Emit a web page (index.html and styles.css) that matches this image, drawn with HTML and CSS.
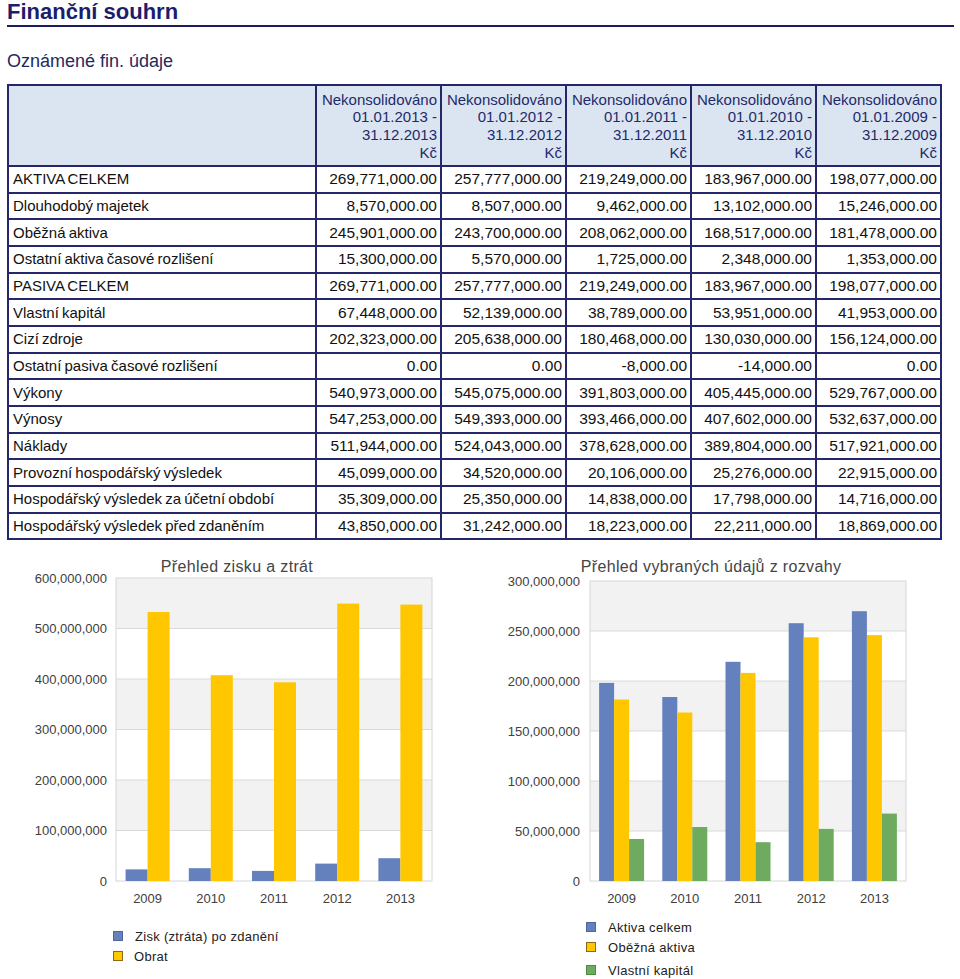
FILE: index.html
```html
<!DOCTYPE html>
<html lang="cs">
<head>
<meta charset="utf-8">
<title>Finanční souhrn</title>
<link rel="stylesheet" href="styles.css">
</head>
<body>
<div class="page">
  <h1 class="title">Finanční souhrn</h1>
  <h2 class="subtitle">Oznámené fin. údaje</h2>
  <table class="fin">
    <thead>
      <tr>
        <th class="lbl-head"></th>
        <th class="col-head">Nekonsolidováno<br>01.01.2013 -<br>31.12.2013<br>Kč</th>
        <th class="col-head">Nekonsolidováno<br>01.01.2012 -<br>31.12.2012<br>Kč</th>
        <th class="col-head">Nekonsolidováno<br>01.01.2011 -<br>31.12.2011<br>Kč</th>
        <th class="col-head">Nekonsolidováno<br>01.01.2010 -<br>31.12.2010<br>Kč</th>
        <th class="col-head">Nekonsolidováno<br>01.01.2009 -<br>31.12.2009<br>Kč</th>
      </tr>
    </thead>
    <tbody>
      <tr><td class="lbl">AKTIVA CELKEM</td><td>269,771,000.00</td><td>257,777,000.00</td><td>219,249,000.00</td><td>183,967,000.00</td><td>198,077,000.00</td></tr>
      <tr><td class="lbl">Dlouhodobý majetek</td><td>8,570,000.00</td><td>8,507,000.00</td><td>9,462,000.00</td><td>13,102,000.00</td><td>15,246,000.00</td></tr>
      <tr><td class="lbl">Oběžná aktiva</td><td>245,901,000.00</td><td>243,700,000.00</td><td>208,062,000.00</td><td>168,517,000.00</td><td>181,478,000.00</td></tr>
      <tr><td class="lbl">Ostatní aktiva časové rozlišení</td><td>15,300,000.00</td><td>5,570,000.00</td><td>1,725,000.00</td><td>2,348,000.00</td><td>1,353,000.00</td></tr>
      <tr><td class="lbl">PASIVA CELKEM</td><td>269,771,000.00</td><td>257,777,000.00</td><td>219,249,000.00</td><td>183,967,000.00</td><td>198,077,000.00</td></tr>
      <tr><td class="lbl">Vlastní kapitál</td><td>67,448,000.00</td><td>52,139,000.00</td><td>38,789,000.00</td><td>53,951,000.00</td><td>41,953,000.00</td></tr>
      <tr><td class="lbl">Cizí zdroje</td><td>202,323,000.00</td><td>205,638,000.00</td><td>180,468,000.00</td><td>130,030,000.00</td><td>156,124,000.00</td></tr>
      <tr><td class="lbl">Ostatní pasiva časové rozlišení</td><td>0.00</td><td>0.00</td><td>-8,000.00</td><td>-14,000.00</td><td>0.00</td></tr>
      <tr><td class="lbl">Výkony</td><td>540,973,000.00</td><td>545,075,000.00</td><td>391,803,000.00</td><td>405,445,000.00</td><td>529,767,000.00</td></tr>
      <tr><td class="lbl">Výnosy</td><td>547,253,000.00</td><td>549,393,000.00</td><td>393,466,000.00</td><td>407,602,000.00</td><td>532,637,000.00</td></tr>
      <tr><td class="lbl">Náklady</td><td>511,944,000.00</td><td>524,043,000.00</td><td>378,628,000.00</td><td>389,804,000.00</td><td>517,921,000.00</td></tr>
      <tr><td class="lbl">Provozní hospodářský výsledek</td><td>45,099,000.00</td><td>34,520,000.00</td><td>20,106,000.00</td><td>25,276,000.00</td><td>22,915,000.00</td></tr>
      <tr><td class="lbl">Hospodářský výsledek za účetní období</td><td>35,309,000.00</td><td>25,350,000.00</td><td>14,838,000.00</td><td>17,798,000.00</td><td>14,716,000.00</td></tr>
      <tr><td class="lbl">Hospodářský výsledek před zdaněním</td><td>43,850,000.00</td><td>31,242,000.00</td><td>18,223,000.00</td><td>22,211,000.00</td><td>18,869,000.00</td></tr>
    </tbody>
  </table>

  <div class="charts">
    <svg class="chart" width="480" height="429" viewBox="0 0 480 429" xmlns="http://www.w3.org/2000/svg">
      <text class="ch-title" x="237" y="23" text-anchor="middle">Přehled zisku a ztrát</text>
      <rect class="band" x="116" y="29" width="316" height="50.5"/>
      <rect class="band" x="116" y="130" width="316" height="50.5"/>
      <rect class="band" x="116" y="231" width="316" height="50.5"/>
      <g class="grid">
        <line x1="116" x2="432" y1="79.5" y2="79.5"/>
        <line x1="116" x2="432" y1="130" y2="130"/>
        <line x1="116" x2="432" y1="180.5" y2="180.5"/>
        <line x1="116" x2="432" y1="231" y2="231"/>
        <line x1="116" x2="432" y1="281.5" y2="281.5"/>
      </g>
      <rect class="frame" x="116" y="29" width="316" height="303"/>
      <g class="bar-blue">
        <rect x="125.6" y="320.4" width="22" height="11.6"/>
        <rect x="188.8" y="319.2" width="22" height="12.8"/>
        <rect x="252" y="321.9" width="22" height="10.1"/>
        <rect x="315.2" y="314.6" width="22" height="17.4"/>
        <rect x="378.4" y="309.2" width="22" height="22.8"/>
      </g>
      <g class="bar-yellow">
        <rect x="147.6" y="63" width="22" height="269"/>
        <rect x="210.8" y="126.2" width="22" height="205.8"/>
        <rect x="274" y="133.3" width="22" height="198.7"/>
        <rect x="337.2" y="54.6" width="22" height="277.4"/>
        <rect x="400.4" y="55.6" width="22" height="276.4"/>
      </g>
      <g class="axis" text-anchor="end">
        <text x="107" y="33.5">600,000,000</text>
        <text x="107" y="84">500,000,000</text>
        <text x="107" y="134.5">400,000,000</text>
        <text x="107" y="185">300,000,000</text>
        <text x="107" y="235.5">200,000,000</text>
        <text x="107" y="286">100,000,000</text>
        <text x="107" y="336.5">0</text>
      </g>
      <g class="axis" text-anchor="middle">
        <text x="147.6" y="354">2009</text>
        <text x="210.8" y="354">2010</text>
        <text x="274" y="354">2011</text>
        <text x="337.2" y="354">2012</text>
        <text x="400.4" y="354">2013</text>
      </g>
      <rect class="lg-blue" x="113.5" y="382.5" width="9" height="9"/>
      <text class="legend" x="135" y="391.5">Zisk (ztráta) po zdanění</text>
      <rect class="lg-yellow" x="113.5" y="402.5" width="9" height="9"/>
      <text class="legend" x="134" y="411.5">Obrat</text>
    </svg>

    <svg class="chart" width="480" height="429" viewBox="480 0 480 429" xmlns="http://www.w3.org/2000/svg">
      <text class="ch-title" x="711" y="23" text-anchor="middle">Přehled vybraných údajů z rozvahy</text>
      <rect class="band" x="590" y="32" width="316" height="50"/>
      <rect class="band" x="590" y="132" width="316" height="50"/>
      <rect class="band" x="590" y="232" width="316" height="50"/>
      <g class="grid">
        <line x1="590" x2="906" y1="82" y2="82"/>
        <line x1="590" x2="906" y1="132" y2="132"/>
        <line x1="590" x2="906" y1="182" y2="182"/>
        <line x1="590" x2="906" y1="232" y2="232"/>
        <line x1="590" x2="906" y1="282" y2="282"/>
      </g>
      <rect class="frame" x="590" y="32" width="316" height="300"/>
      <g class="bar-blue">
        <rect x="599.1" y="133.9" width="15" height="198.1"/>
        <rect x="662.3" y="148" width="15" height="184"/>
        <rect x="725.5" y="112.8" width="15" height="219.2"/>
        <rect x="788.7" y="74.2" width="15" height="257.8"/>
        <rect x="851.9" y="62.2" width="15" height="269.8"/>
      </g>
      <g class="bar-yellow">
        <rect x="614.1" y="150.5" width="15" height="181.5"/>
        <rect x="677.3" y="163.5" width="15" height="168.5"/>
        <rect x="740.5" y="123.9" width="15" height="208.1"/>
        <rect x="803.7" y="88.3" width="15" height="243.7"/>
        <rect x="866.9" y="86.1" width="15" height="245.9"/>
      </g>
      <g class="bar-green">
        <rect x="629.1" y="290" width="15" height="42"/>
        <rect x="692.3" y="278" width="15" height="54"/>
        <rect x="755.5" y="293.2" width="15" height="38.8"/>
        <rect x="818.7" y="279.9" width="15" height="52.1"/>
        <rect x="881.9" y="264.6" width="15" height="67.4"/>
      </g>
      <g class="axis" text-anchor="end">
        <text x="580" y="36.5">300,000,000</text>
        <text x="580" y="86.5">250,000,000</text>
        <text x="580" y="136.5">200,000,000</text>
        <text x="580" y="186.5">150,000,000</text>
        <text x="580" y="236.5">100,000,000</text>
        <text x="580" y="286.5">50,000,000</text>
        <text x="580" y="336.5">0</text>
      </g>
      <g class="axis" text-anchor="middle">
        <text x="621.6" y="354">2009</text>
        <text x="684.8" y="354">2010</text>
        <text x="748" y="354">2011</text>
        <text x="811.2" y="354">2012</text>
        <text x="874.4" y="354">2013</text>
      </g>
      <rect class="lg-blue" x="586.5" y="373.5" width="9" height="9"/>
      <text class="legend" x="608" y="382.5">Aktiva celkem</text>
      <rect class="lg-yellow" x="586.5" y="393.5" width="9" height="9"/>
      <text class="legend" x="608" y="402.5">Oběžná aktiva</text>
      <rect class="lg-green" x="586.5" y="416.5" width="9" height="9"/>
      <text class="legend" x="608" y="425.5">Vlastní kapitál</text>
    </svg>
  </div>
</div>
</body>
</html>
```

FILE: styles.css
```css
html, body {
  margin: 0;
  padding: 0;
  background: #ffffff;
}

body {
  font-family: "Liberation Sans", Arial, "Helvetica", sans-serif;
  color: #111111;
}

.page {
  padding: 0 6px 0 7px;
}

.title {
  margin: 0;
  width: 947px;
  font-size: 22px;
  font-weight: bold;
  line-height: 24px;
  padding-bottom: 1px;
  color: #1d1d6b;
  border-bottom: 2px solid #1d1d5e;
}

.subtitle {
  margin: 24px 0 13px 0;
  font-size: 18px;
  font-weight: normal;
  line-height: 20px;
  color: #1f2a5e;
}

.fin {
  border-collapse: separate;
  border-spacing: 0;
  table-layout: fixed;
  width: 935px;
  border-top: 2px solid #26266a;
  border-left: 2px solid #26266a;
}

.fin th,
.fin td {
  box-sizing: border-box;
  border-right: 2px solid #26266a;
  border-bottom: 2px solid #26266a;
  text-align: right;
  white-space: nowrap;
  overflow: hidden;
}

.fin th {
  background: #dbe5f1;
  font-weight: normal;
  font-size: 15px;
  line-height: 17.7px;
  color: #1f2a6b;
  padding: 4.5px 3px 3.7px 2px;
  vertical-align: top;
}

.fin .lbl-head {
  width: 308px;
}

.fin .col-head {
  width: 125px;
}

.fin td {
  font-size: 15.5px;
  line-height: 18px;
  padding: 3.33px 3px 3.34px 2px;
  color: #111111;
}

.fin td.lbl {
  text-align: left;
  font-size: 15px;
  word-spacing: -1px;
  padding-left: 4px;
}

.charts {
  display: flex;
  margin: 9px 0 0 -7px;
}

.chart {
  display: block;
  flex: 0 0 480px;
  font-family: "Liberation Sans", Arial, sans-serif;
}

.ch-title {
  font-size: 16px;
  letter-spacing: 0.35px;
  fill: #454545;
}

.band {
  fill: #f2f2f2;
}

.grid line {
  stroke: #dadada;
  stroke-width: 1;
}

.frame {
  fill: none;
  stroke: #d6d6d6;
  stroke-width: 1;
}

.bar-blue rect {
  fill: #6480bd;
}

.bar-yellow rect {
  fill: #ffc700;
}

.bar-green rect {
  fill: #6eab5f;
}

.axis text {
  font-size: 13px;
  fill: #404040;
}

.legend {
  font-size: 13px;
  letter-spacing: 0.3px;
  fill: #222222;
}

.lg-blue {
  fill: #6480bd;
  stroke: #4e65a0;
  stroke-width: 1;
}

.lg-yellow {
  fill: #ffc700;
  stroke: #8a6a10;
  stroke-width: 1;
}

.lg-green {
  fill: #6eab5f;
  stroke: #4f8a45;
  stroke-width: 1;
}
```
